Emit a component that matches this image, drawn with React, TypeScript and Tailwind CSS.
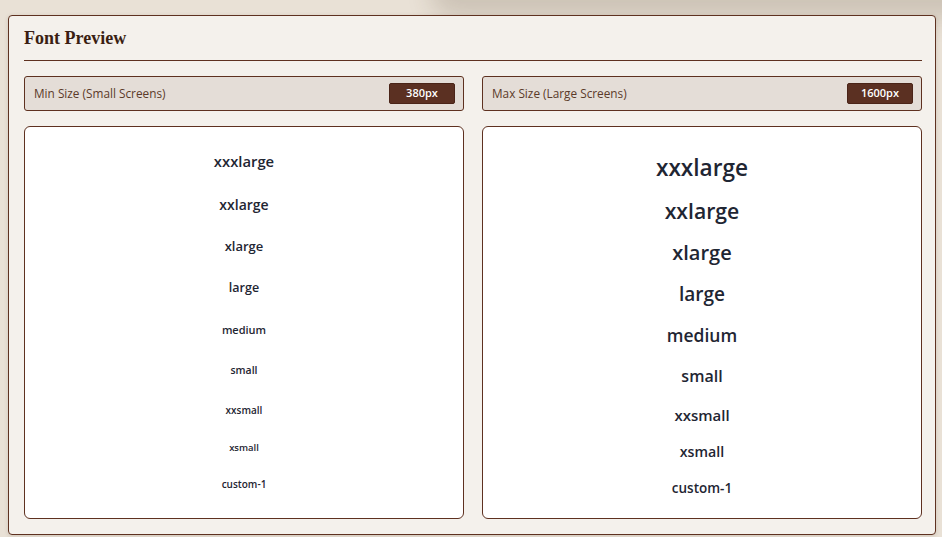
const sans = "font-['Open_Sans','Noto_Sans',sans-serif]";

type Row = { label: string; size: string; h: string };

const minRows: Row[] = [
  { label: "xxxlarge", size: "text-[14.8px]", h: "h-[44px]" },
  { label: "xxlarge", size: "text-[14px]", h: "h-[43px]" },
  { label: "xlarge", size: "text-[13px]", h: "h-[41px]" },
  { label: "large", size: "text-[12.5px]", h: "h-[42px]" },
  { label: "medium", size: "text-[11px]", h: "h-[41px]" },
  { label: "small", size: "text-[10.5px]", h: "h-[41px]" },
  { label: "xxsmall", size: "text-[10px]", h: "h-[38px]" },
  { label: "xsmall", size: "text-[9.5px]", h: "h-[37px]" },
  { label: "custom-1", size: "text-[10px]", h: "h-[36px]" },
];

const maxRows: Row[] = [
  { label: "xxxlarge", size: "text-[22.6px]", h: "h-[43px]" },
  { label: "xxlarge", size: "text-[21.2px]", h: "h-[42px]" },
  { label: "xlarge", size: "text-[20px]", h: "h-[41px]" },
  { label: "large", size: "text-[19px]", h: "h-[42px]" },
  { label: "medium", size: "text-[17.5px]", h: "h-[41px]" },
  { label: "small", size: "text-[16px]", h: "h-[40px]" },
  { label: "xxsmall", size: "text-[15px]", h: "h-[38px]" },
  { label: "xsmall", size: "text-[14.2px]", h: "h-[37px]" },
  { label: "custom-1", size: "text-[13.5px]", h: "h-[36px]" },
];

function SizeBar({ label, value }: { label: string; value: string }) {
  return (
    <div className="h-[35px] flex items-center justify-between pl-[9px] pr-[8px] bg-[#e4ddd7] border border-[#5e3120] rounded-[3px]">
      <span className={`${sans} text-[11.8px] text-[#5b3a29]`}>{label}</span>
      <span
        className={`${sans} w-[66px] h-[21px] flex items-center justify-center bg-[#5b3022] border border-[#4a2418] rounded-[2px] text-white text-[11px] font-semibold`}
      >
        {value}
      </span>
    </div>
  );
}

function Preview({ rows, top }: { rows: Row[]; top: string }) {
  return (
    <div className={`h-[393px] bg-white border border-[#5e3120] rounded-[6px] flex flex-col ${top}`}>
      {rows.map((r) => (
        <div key={r.label} className={`${r.h} shrink-0 flex items-center justify-center`}>
          <span className={`${sans} ${r.size} font-semibold text-[#1f2633] leading-none`}>{r.label}</span>
        </div>
      ))}
    </div>
  );
}

export default function App() {
  return (
    <div className="relative h-[537px] overflow-hidden bg-[#e9e1d6] pt-[15px] pl-[8px]">
      {/* shadow cast by the bar above */}
      <div className="absolute -top-[30px] left-[440px] w-[540px] h-[30px] rounded-full shadow-[0_8px_24px_10px_rgba(80,60,40,0.18)]" />
      <div className="relative w-[928px] h-[520px] bg-[#f4f1ec] border border-[#5e3120] rounded-[4px] pl-[15px] pr-[13px] shadow-[0_1px_4px_rgba(60,40,20,0.15)]">
        <div className="h-[45px] flex items-center border-b border-[#5e3120]">
          <h2 className="font-['Liberation_Serif',serif] font-bold text-[18px] text-[#3a1e12]">Font Preview</h2>
        </div>

        <div className="mt-[15px] grid grid-cols-2 gap-[18px]">
          <SizeBar label="Min Size (Small Screens)" value="380px" />
          <SizeBar label="Max Size (Large Screens)" value="1600px" />
        </div>

        <div className="mt-[15px] grid grid-cols-2 gap-[18px]">
          <Preview rows={minRows} top="pt-[12px]" />
          <Preview rows={maxRows} top="pt-[20px]" />
        </div>
      </div>
    </div>
  );
}
